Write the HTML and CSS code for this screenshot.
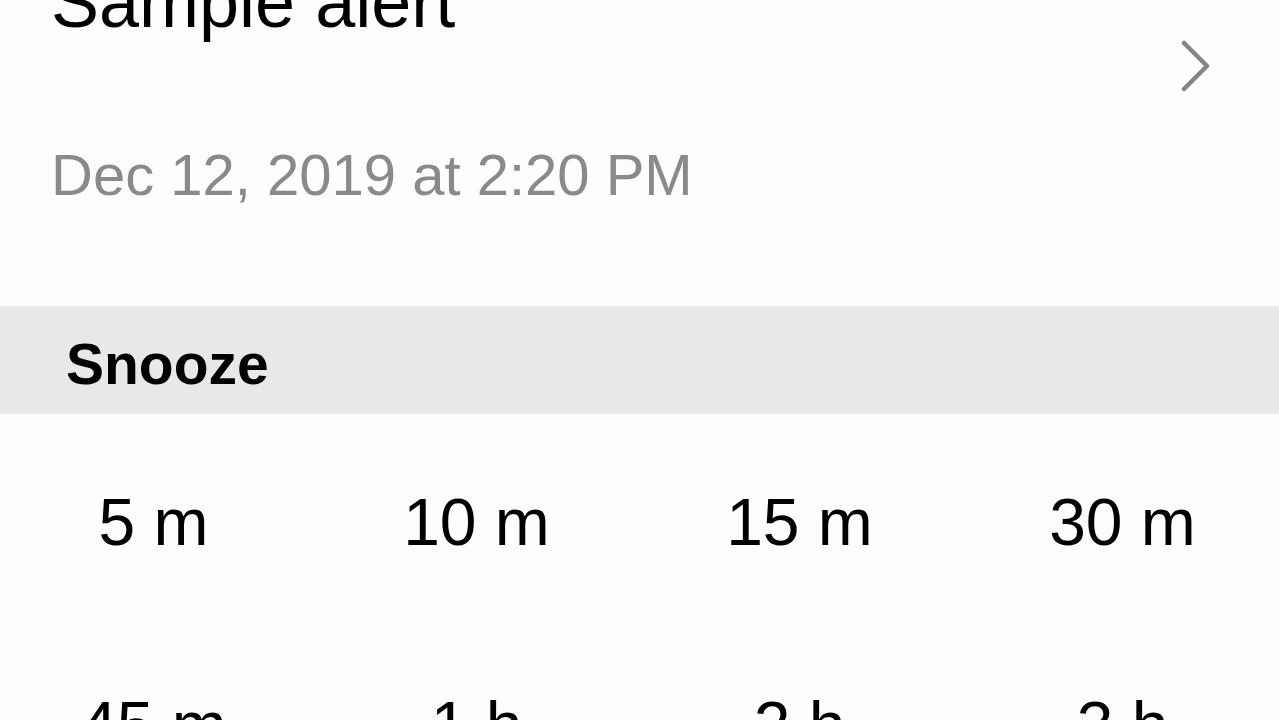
FILE: index.html
```html
<!DOCTYPE html>
<html lang="en">
  <head>
    <meta charset="UTF-8" />
    <meta name="viewport" content="width=device-width, initial-scale=1.0" />
    <title>Sample alert</title>
    <link rel="stylesheet" href="styles.css">
  </head>
  <body>
    <div class="alert-header">
      <div class="alert-info">
        <div class="alert-title">Sample alert</div>
        <div class="alert-date">Dec 12, 2019 at 2:20 PM</div>
      </div>
      <div class="chevron">
        <svg width="32" height="52" viewBox="0 0 32 52">
          <polyline points="4,3 27,26 4,49" fill="none" stroke="#858587" stroke-width="4.5" stroke-linecap="round" stroke-linejoin="round" />
        </svg>
      </div>
    </div>

    <div class="section-header">Snooze</div>

    <div class="snooze-grid">
      <div class="snooze-option">5 m</div>
      <div class="snooze-option">10 m</div>
      <div class="snooze-option">15 m</div>
      <div class="snooze-option">30 m</div>
      <div class="snooze-option">45 m</div>
      <div class="snooze-option">1 h</div>
      <div class="snooze-option">2 h</div>
      <div class="snooze-option">3 h</div>
    </div>
  </body>
</html>
```

FILE: styles.css
```css
body {
  margin: 0;
  font-family: "Liberation Sans", Arial, sans-serif;
  background-color: #fdfdfd;
  color: #000;
  overflow: hidden;
  height: 720px;
}
.alert-header {
  display: flex;
  justify-content: space-between;
  align-items: flex-start;
  margin-top: -34px;
  padding: 0 67px 0 51px;
}
.alert-title {
  font-size: 72px;
  line-height: 72px;
}
.alert-date {
  margin-top: 102px;
  font-size: 58px;
  line-height: 70px;
  color: #8a8a8a;
}
.chevron {
  margin-top: 74px;
}
.chevron svg {
  display: block;
}
.section-header {
  margin-top: 96px;
  height: 100px;
  padding: 8px 0 0 66px;
  background-color: #e8e8ea;
  font-size: 57px;
  font-weight: bold;
  line-height: 100px;
}
.snooze-grid {
  display: grid;
  grid-template-columns: repeat(4, 323px);
  grid-auto-rows: 203px;
  align-items: center;
  margin-left: -8px;
  padding-top: 6px;
}
.snooze-option {
  text-align: center;
  font-size: 66px;
  line-height: 66px;
}
```
